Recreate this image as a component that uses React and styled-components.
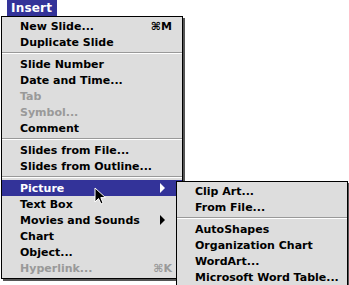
import React from 'react'
import styled, { createGlobalStyle } from 'styled-components'

const GlobalStyle = createGlobalStyle`
  html, body {
    margin: 0;
    padding: 0;
    background: #ffffff;
  }
  body {
    font-family: "DejaVu Sans", Verdana, sans-serif;
    font-weight: bold;
    font-size: 11px;
    -webkit-font-smoothing: none;
  }
`

const Screen = styled.div`
  position: relative;
  width: 349px;
  height: 285px;
  overflow: hidden;
`

const MenuTitle = styled.div`
  margin-left: 7px;
  width: 46px;
  height: 16px;
  line-height: 16px;
  padding-left: 4px;
  background: #333399;
  color: #ffffff;
  font-size: 12px;
  letter-spacing: 0.2px;
`

const Menu = styled.div`
  position: ${(p) => (p.$sub ? 'absolute' : 'relative')};
  left: ${(p) => (p.$sub ? '100%' : 'auto')};
  top: ${(p) => (p.$sub ? '1px' : 'auto')};
  margin-left: ${(p) => (p.$sub ? '-6px' : '1px')};
  width: ${(p) => p.$width}px;
  display: flex;
  flex-direction: column;
  padding: 1px 0 2px;
  background: #dddddd;
  border: 1px solid #000000;
  box-shadow: 2px 2px 0 #555555;
  z-index: ${(p) => (p.$sub ? 2 : 1)};
`

const Item = styled.div`
  position: relative;
  height: 16px;
  display: flex;
  align-items: center;
  padding: 0 10px 0 18px;
  background: ${(p) => (p.$active ? '#333399' : 'transparent')};
  color: ${(p) => (p.$active ? '#ffffff' : p.$disabled ? '#999999' : '#000000')};
  white-space: nowrap;
`

const Label = styled.span`
  flex: 1;
`

const Shortcut = styled.span`
  font-size: 11px;
`

const Arrow = styled.span`
  width: 0;
  height: 0;
  margin-right: 7px;
  border-top: 5px solid transparent;
  border-bottom: 5px solid transparent;
  border-left: 5px solid ${(p) => (p.$active ? '#ffffff' : '#000000')};
`

const Separator = styled.div`
  height: 6px;
  display: flex;
  flex-direction: column;
  justify-content: center;
  &::before {
    content: '';
    height: 1px;
    background: #999999;
  }
  &::after {
    content: '';
    height: 1px;
    background: #ffffff;
  }
`

const Cursor = styled.svg`
  position: absolute;
  left: 94px;
  top: 187px;
  z-index: 5;
`

const submenu = [
  { label: 'Clip Art...' },
  { label: 'From File...' },
  { sep: true },
  { label: 'AutoShapes' },
  { label: 'Organization Chart' },
  { label: 'WordArt...' },
  { label: 'Microsoft Word Table...' },
]

const items = [
  { label: 'New Slide...', key: '⌘M' },
  { label: 'Duplicate Slide' },
  { sep: true },
  { label: 'Slide Number' },
  { label: 'Date and Time...' },
  { label: 'Tab', disabled: true },
  { label: 'Symbol...', disabled: true },
  { label: 'Comment' },
  { sep: true },
  { label: 'Slides from File...' },
  { label: 'Slides from Outline...' },
  { sep: true },
  { label: 'Picture', arrow: true, active: true, children: submenu },
  { label: 'Text Box' },
  { label: 'Movies and Sounds', arrow: true },
  { label: 'Chart' },
  { label: 'Object...' },
  { label: 'Hyperlink...', key: '⌘K', disabled: true },
]

function MenuList({ list, width, sub }) {
  return (
    <Menu $width={width} $sub={sub}>
      {list.map((it, i) =>
        it.sep ? (
          <Separator key={i} />
        ) : (
          <Item key={i} $active={it.active} $disabled={it.disabled}>
            <Label>{it.label}</Label>
            {it.key && <Shortcut>{it.key}</Shortcut>}
            {it.arrow && <Arrow $active={it.active} />}
            {it.children && <MenuList list={it.children} width={170} sub />}
          </Item>
        )
      )}
    </Menu>
  )
}

export default function App() {
  return (
    <Screen>
      <GlobalStyle />
      <MenuTitle>Insert</MenuTitle>
      <MenuList list={items} width={180} />
      <Cursor width="13" height="19" viewBox="0 0 13 19">
        <path
          d="M1 1 L1 15 L4.5 11.5 L7 17 L9 16 L6.8 10.6 L11.5 10.6 Z"
          fill="#000000"
          stroke="#ffffff"
          strokeWidth="1"
        />
      </Cursor>
    </Screen>
  )
}
